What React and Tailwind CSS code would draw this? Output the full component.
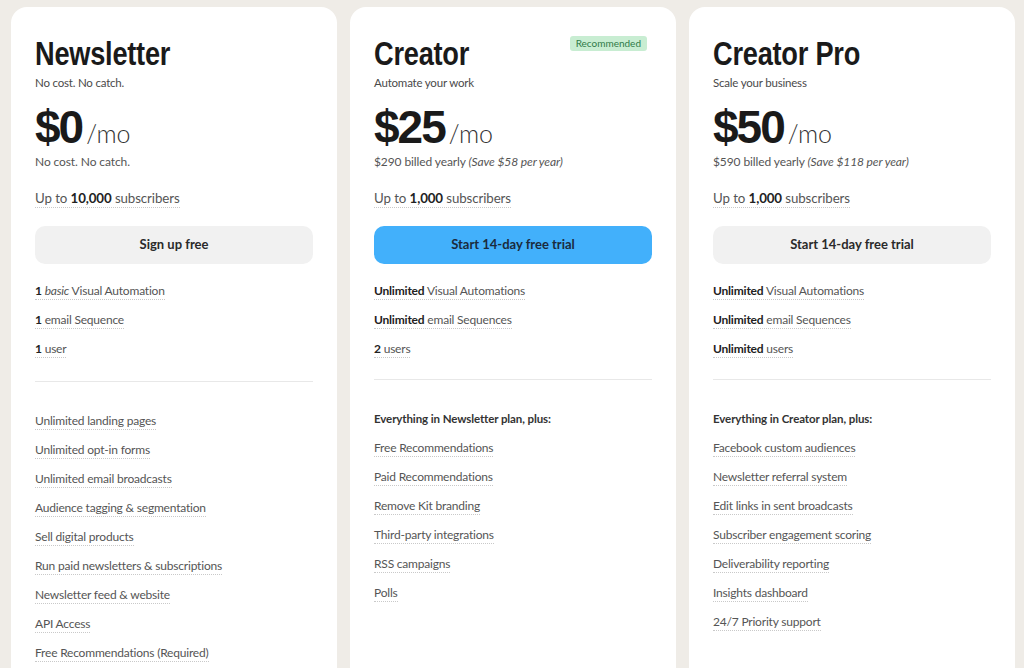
import React from 'react';

const plans = [
  {
    name: 'Newsletter',
    tagline: 'No cost. No catch.',
    price: '$0',
    billed: <>No cost. No catch.</>,
    subs: '10,000',
    cta: 'Sign up free',
    primary: false,
    basics: [
      [<b key="b">1</b>, ' ', <i key="i">basic</i>, ' Visual Automation'],
      [<b key="b">1</b>, ' email Sequence'],
      [<b key="b">1</b>, ' user'],
    ],
    heading: null,
    features: [
      'Unlimited landing pages',
      'Unlimited opt-in forms',
      'Unlimited email broadcasts',
      'Audience tagging & segmentation',
      'Sell digital products',
      'Run paid newsletters & subscriptions',
      'Newsletter feed & website',
      'API Access',
      'Free Recommendations (Required)',
    ],
  },
  {
    name: 'Creator',
    tagline: 'Automate your work',
    price: '$25',
    billed: (
      <>
        $290 billed yearly <i>(Save $58 per year)</i>
      </>
    ),
    subs: '1,000',
    cta: 'Start 14-day free trial',
    primary: true,
    badge: 'Recommended',
    basics: [
      [<b key="b">Unlimited</b>, ' Visual Automations'],
      [<b key="b">Unlimited</b>, ' email Sequences'],
      [<b key="b">2</b>, ' users'],
    ],
    heading: 'Everything in Newsletter plan, plus:',
    features: [
      'Free Recommendations',
      'Paid Recommendations',
      'Remove Kit branding',
      'Third-party integrations',
      'RSS campaigns',
      'Polls',
    ],
  },
  {
    name: 'Creator Pro',
    tagline: 'Scale your business',
    price: '$50',
    billed: (
      <>
        $590 billed yearly <i>(Save $118 per year)</i>
      </>
    ),
    subs: '1,000',
    cta: 'Start 14-day free trial',
    primary: false,
    basics: [
      [<b key="b">Unlimited</b>, ' Visual Automations'],
      [<b key="b">Unlimited</b>, ' email Sequences'],
      [<b key="b">Unlimited</b>, ' users'],
    ],
    heading: 'Everything in Creator plan, plus:',
    features: [
      'Facebook custom audiences',
      'Newsletter referral system',
      'Edit links in sent broadcasts',
      'Subscriber engagement scoring',
      'Deliverability reporting',
      'Insights dashboard',
      '24/7 Priority support',
    ],
  },
];

const dotted =
  'inline-block border-b border-dotted border-[#c9c9c9] leading-[17px]';

function PlanCard({ plan }) {
  return (
    <div className="relative w-[326px] shrink-0 rounded-t-[16px] bg-white px-6 pt-[28px] pb-10 h-[720px]">
      {plan.badge && (
        <span className="absolute right-[29px] top-[29px] rounded-[3px] bg-[#c8edd2] px-[6px] py-[1px] text-[10px] leading-[13px] text-[#2f7b48]">
          {plan.badge}
        </span>
      )}

      {/* Header */}
      <h2 className="font-['Liberation_Sans','Arial',sans-serif] text-[34px] font-bold leading-[37px] tracking-[-0.3px] text-[#1a1a1a]">
        <span className="inline-block origin-left scale-x-[0.8]">
          {plan.name}
        </span>
      </h2>
      <p className="mt-[3px] text-[11.5px] leading-[16px] tracking-[-0.2px] text-[#4a4a4a]">
        {plan.tagline}
      </p>

      {/* Price */}
      <div className="mt-[10px] flex items-baseline">
        <span className="font-['Liberation_Sans','Arial',sans-serif] text-[46px] font-bold leading-[52px] tracking-[-2px] text-[#1a1a1a]">
          {plan.price}
        </span>
        <span className="ml-[4px] text-[25px] font-light leading-[30px] text-[#333]">
          /mo
        </span>
      </div>
      <p className="mt-[1px] text-[12px] leading-[16px] tracking-[-0.1px] text-[#555]">
        {plan.billed}
      </p>

      <p className="mt-[19px] text-[13.3px] leading-[18px] tracking-[-0.1px] text-[#555]">
        <span className={dotted}>
          Up to <b className="text-[#222]">{plan.subs}</b> subscribers
        </span>
      </p>

      {/* CTA */}
      <button
        className={
          'mt-[18px] flex h-[38px] w-full items-center justify-center rounded-[10px] text-[13px] font-bold ' +
          (plan.primary
            ? 'bg-[#42b0fb] text-[#1b2b3d]'
            : 'bg-[#f1f1f1] text-[#2a2a2a]')
        }
      >
        {plan.cta}
      </button>

      {/* Basics */}
      <ul className="mt-[18px] flex flex-col gap-[11px] text-[12px] tracking-[-0.2px] text-[#555]">
        {plan.basics.map((parts, i) => (
          <li key={i}>
            <span className={dotted + ' [&_b]:text-[#222]'}>{parts}</span>
          </li>
        ))}
      </ul>

      <div
        className={
          'border-t border-[#e8e8e8] ' +
          (plan.heading ? 'mt-[21px]' : 'mt-[23px]')
        }
      />

      {/* Features */}
      <div className="mt-[30px]">
        {plan.heading && (
          <p className="mb-[12px] text-[11.5px] font-bold leading-[17px] tracking-[-0.1px] text-[#333]">
            {plan.heading}
          </p>
        )}
        <ul className="flex flex-col gap-[11px] text-[12px] tracking-[-0.2px] text-[#555]">
          {plan.features.map((f) => (
            <li key={f}>
              <span className={dotted}>{f}</span>
            </li>
          ))}
        </ul>
      </div>
    </div>
  );
}

export default function App() {
  return (
    <div className="h-[668px] overflow-hidden bg-[#efece7] font-['Lato','Open_Sans',sans-serif]">
      <div className="flex gap-[13px] pl-[11px] pt-[7px]">
        {plans.map((p) => (
          <PlanCard key={p.name} plan={p} />
        ))}
      </div>
    </div>
  );
}
